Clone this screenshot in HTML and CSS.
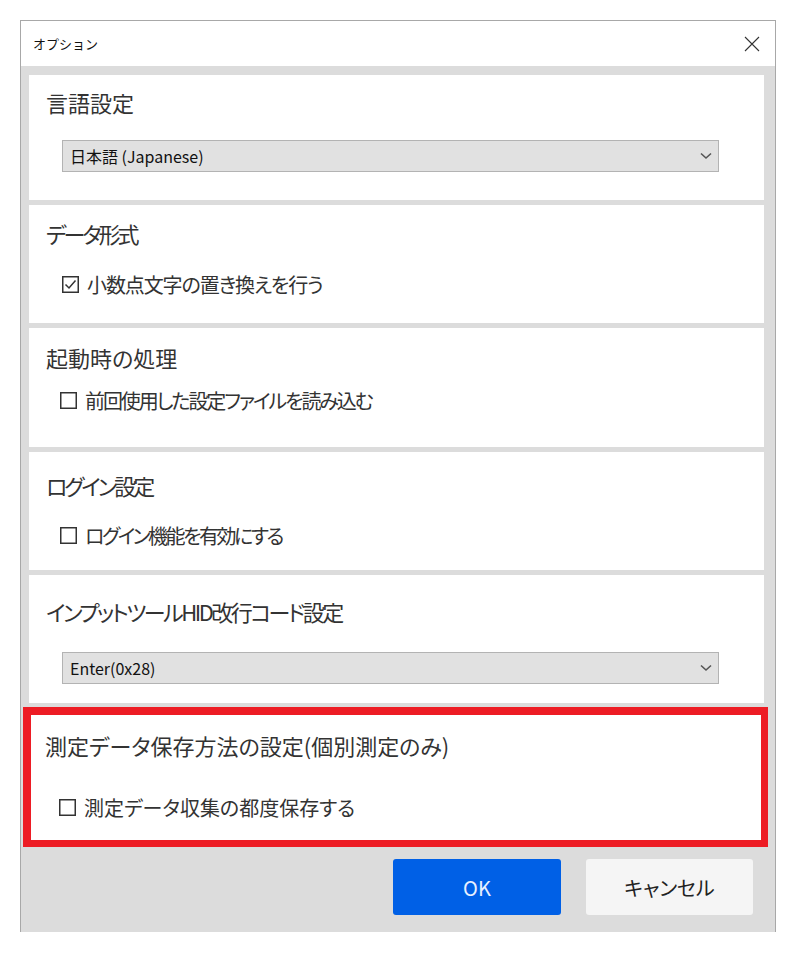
FILE: index.html
```html
<!DOCTYPE html>
<html lang="ja">
<head>
    <meta charset="UTF-8">
    <meta name="viewport" content="width=device-width, initial-scale=1.0">
    <title>オプション</title>
    <link rel="stylesheet" href="styles.css">
</head>
<body>

<div class="dialog">
    <div class="titlebar">
        <span class="title">オプション</span>
        <svg class="close" width="16" height="16" viewBox="0 0 16 16">
            <path d="M1 1 L15 15 M15 1 L1 15" stroke="#333" stroke-width="1.1" fill="none"/>
        </svg>
    </div>

    <div class="content">
        <!-- 言語 -->
        <section class="panel panel-lang">
            <h2 class="panel-title">言語設定</h2>
            <div class="combo">
                <span>日本語 (Japanese)</span>
                <svg width="12" height="8" viewBox="0 0 12 8"><path d="M1 1.5 L6 6 L11 1.5" stroke="#555" stroke-width="1.6" fill="none"/></svg>
            </div>
        </section>

        <section class="panel panel-data">
            <h2 class="panel-title">データ形式</h2>
            <label class="check">
                <svg width="17" height="17" viewBox="0 0 17 17"><rect x="0.75" y="0.75" width="15.5" height="15.5" fill="#fff" stroke="#333" stroke-width="1.5"/><path d="M3.5 8.5 L7 12 L13.5 4.5" stroke="#333" stroke-width="1.5" fill="none"/></svg>
                <span>小数点文字の置き換えを行う</span>
            </label>
        </section>

        <section class="panel panel-start">
            <h2 class="panel-title">起動時の処理</h2>
            <label class="check">
                <svg width="17" height="17" viewBox="0 0 17 17"><rect x="0.75" y="0.75" width="15.5" height="15.5" fill="#fff" stroke="#333" stroke-width="1.5"/></svg>
                <span>前回使用した設定ファイルを読み込む</span>
            </label>
        </section>

        <section class="panel panel-login">
            <h2 class="panel-title">ログイン設定</h2>
            <label class="check">
                <svg width="17" height="17" viewBox="0 0 17 17"><rect x="0.75" y="0.75" width="15.5" height="15.5" fill="#fff" stroke="#333" stroke-width="1.5"/></svg>
                <span>ログイン機能を有効にする</span>
            </label>
        </section>

        <section class="panel panel-hid">
            <h2 class="panel-title">インプットツールHID改行コード設定</h2>
            <div class="combo">
                <span>Enter(0x28)</span>
                <svg width="12" height="8" viewBox="0 0 12 8"><path d="M1 1.5 L6 6 L11 1.5" stroke="#555" stroke-width="1.6" fill="none"/></svg>
            </div>
        </section>

        <!-- 赤枠で強調 -->
        <section class="panel panel-save">
            <h2 class="panel-title">測定データ保存方法の設定(個別測定のみ)</h2>
            <label class="check">
                <svg width="17" height="17" viewBox="0 0 17 17"><rect x="0.75" y="0.75" width="15.5" height="15.5" fill="#fff" stroke="#333" stroke-width="1.5"/></svg>
                <span>測定データ収集の都度保存する</span>
            </label>
        </section>
    </div>

    <div class="footer">
        <button class="btn btn-primary" type="button">OK</button>
        <button class="btn" type="button">キャンセル</button>
    </div>
</div>

</body>
</html>
```

FILE: styles.css
```css
body {
    margin: 0;
    background: #fff;
    font-family: "Noto Sans CJK JP", "Noto Sans", sans-serif;
    color: #333;
}
.dialog {
    box-sizing: border-box;
    width: 756px;
    height: 912px;
    margin: 20px 0 0 20px;
    border: 1px solid #a8a8a8;
    border-bottom: none;
    background: #dcdcdc;
    display: flex;
    flex-direction: column;
}
.titlebar {
    height: 45px;
    background: #fff;
    display: flex;
    align-items: center;
    justify-content: space-between;
    padding: 0 15px 0 12px;
}
.title {
    font-size: 13px;
    color: #111;
    line-height: 1;
}
.content {
    padding: 9px 11px 0 8px;
    display: flex;
    flex-direction: column;
    gap: 5px;
}
.panel {
    box-sizing: border-box;
    background: #fff;
    padding-left: 17px;
    font-feature-settings: "palt";
}
.panel-title {
    margin: 0;
    font-size: 22px;
    font-weight: normal;
    line-height: 26px;
    color: #333;
}
.combo {
    box-sizing: border-box;
    width: 657px;
    height: 32px;
    margin-left: 16px;
    padding: 0 6px 0 7px;
    background: #e1e1e1;
    border: 1px solid #b3b3b3;
    display: flex;
    align-items: center;
    justify-content: space-between;
    font-size: 16px;
    color: #111;
    font-feature-settings: normal;
}
.check {
    display: flex;
    align-items: center;
    gap: 8px;
    margin-left: 14px;
    height: 26px;
    font-size: 20px;
    color: #333;
}
.check svg {
    flex: none;
}

.panel-lang { height: 125px; padding-top: 14px; }
.panel-lang .combo { margin-top: 25px; }
.panel-data { height: 118px; padding-top: 15px; }
.panel-data .panel-title { letter-spacing: -3px; }
.panel-data .check { margin-top: 25px; margin-left: 16px; letter-spacing: -1.1px; }
.panel-start { height: 119px; padding-top: 16px; }
.panel-start .check { margin-top: 17px; letter-spacing: -2.1px; }
.panel-login { height: 118px; padding-top: 20px; }
.panel-login .panel-title { letter-spacing: -3px; }
.panel-login .check { margin-top: 24px; letter-spacing: -2.5px; }
.panel-hid { height: 128px; padding-top: 23px; }
.panel-hid .panel-title { letter-spacing: -2.5px; }
.panel-hid .combo { margin-top: 28px; }
.panel-save {
    height: 140px;
    margin: -1px -4px 0 -6px;
    border: 8px solid #ed1c24;
    border-right-width: 7px;
    border-bottom-width: 7px;
    padding-top: 17px;
    padding-left: 14px;
}
.panel-save .check { margin-top: 36px; }

.footer {
    flex: 1;
    display: flex;
    justify-content: flex-end;
    align-items: flex-start;
    gap: 25px;
    padding: 12px 22px 0 0;
}
.btn {
    width: 167px;
    height: 56px;
    border: none;
    border-radius: 3px;
    background: #f5f5f5;
    color: #222;
    font-family: "Noto Sans CJK JP", "Noto Sans", sans-serif;
    font-size: 20px;
    font-feature-settings: "palt";
    cursor: pointer;
}
.btn-primary {
    width: 168px;
    background: #0060e6;
    color: #e8f0ff;
}
```
